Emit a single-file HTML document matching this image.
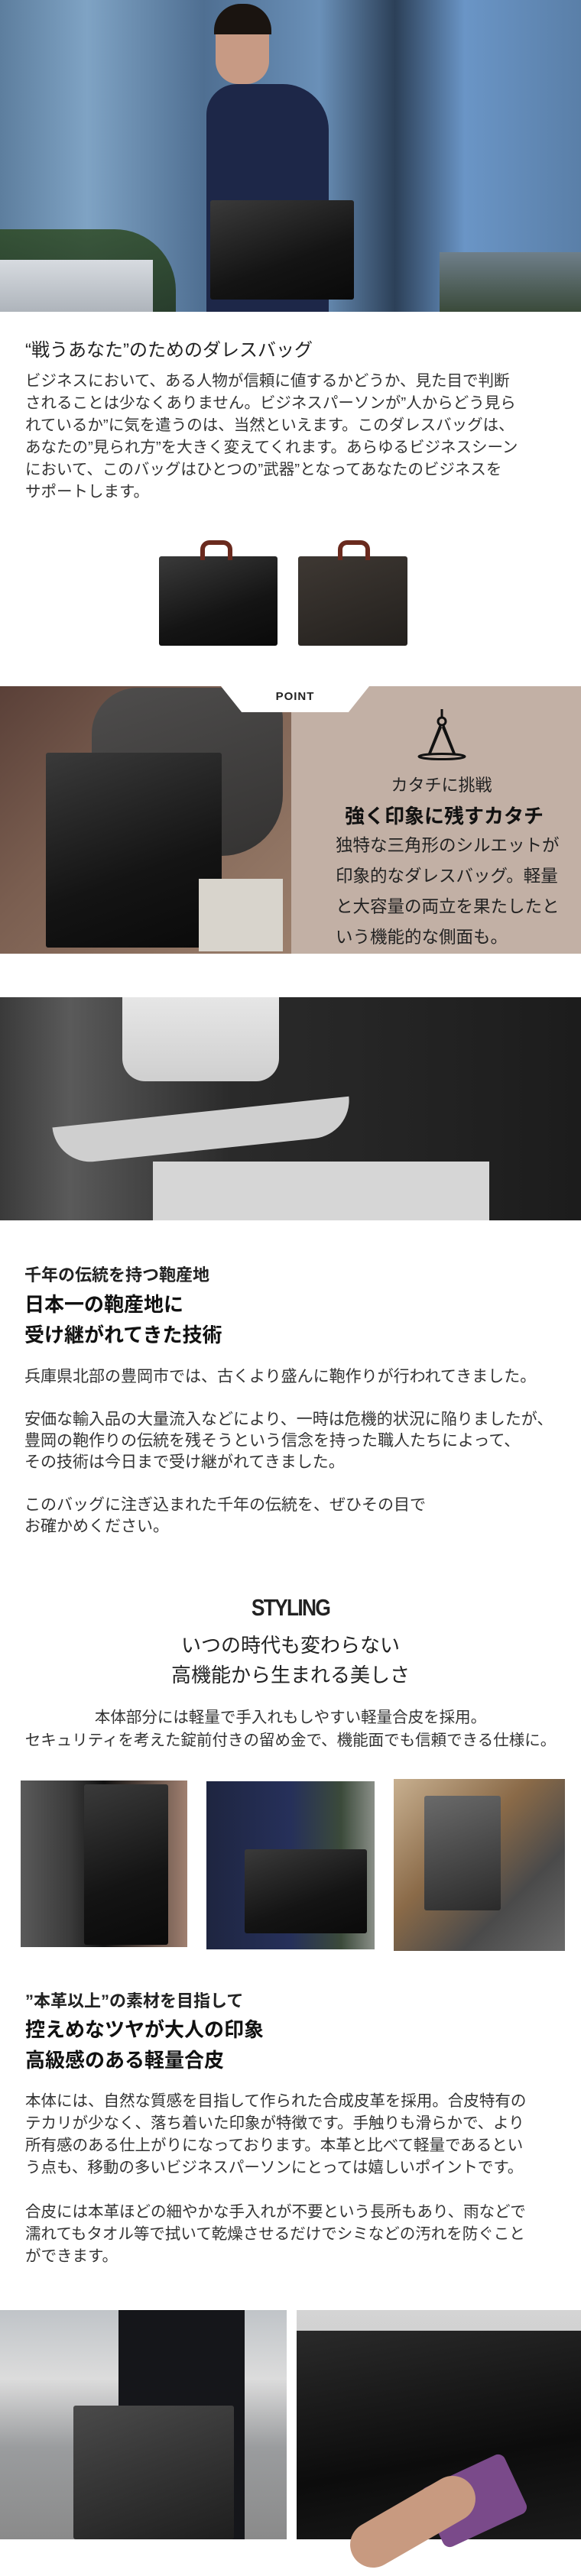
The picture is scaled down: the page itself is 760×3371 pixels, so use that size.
<!DOCTYPE html>
<html><head><meta charset="utf-8">
<style>
*{margin:0;padding:0;box-sizing:border-box}
body{width:760px;height:3359px;background:#fff;position:relative;overflow:hidden;font-family:"Liberation Sans","Noto Sans CJK JP",sans-serif;color:#222}
.a{position:absolute}
.t{position:absolute;white-space:nowrap}
.nw{white-space:nowrap}
.bag{position:absolute;background:linear-gradient(160deg,#3a3a3a,#141414 60%,#0a0a0a);border-radius:3px}
</style></head><body>

<!-- hero -->
<div class="a" style="left:0;top:0;width:760px;height:408px;background:linear-gradient(90deg,#5d7e9e 0%,#7fa3c4 15%,#4f6f92 35%,#6a90b8 55%,#2c4058 68%,#6a95c6 80%,#5a7fa8 100%)"></div>
<div class="a" style="left:0;top:300px;width:230px;height:108px;background:linear-gradient(180deg,#2e4a24,#1f3218);border-radius:0 80px 0 0;opacity:.85"></div>
<div class="a" style="left:0;top:340px;width:200px;height:68px;background:linear-gradient(180deg,#d7dbe0,#aeb4bb)"></div>
<div class="a" style="left:575px;top:330px;width:185px;height:78px;background:linear-gradient(180deg,#6f7f8a,#3a4a3a)"></div>
<div class="a" style="left:270px;top:110px;width:160px;height:298px;background:#1d2748;border-radius:40px 60px 0 0"></div>
<div class="a" style="left:282px;top:10px;width:70px;height:100px;background:#c79a84;border-radius:35px 35px 30px 30px"></div>
<div class="a" style="left:280px;top:5px;width:75px;height:40px;background:#1a1410;border-radius:35px 35px 0 0"></div>
<div class="bag" style="left:275px;top:262px;width:188px;height:130px"></div>

<!-- intro -->
<div class="t" style="left:33px;top:438px;font-size:24px;color:#222">“戦うあなた”のためのダレスバッグ</div>
<div class="a nw" style="left:33px;top:484px;font-size:20.5px;line-height:29px;color:#333">ビジネスにおいて、ある人物が信頼に値するかどうか、見た目で判断<br>されることは少なくありません。ビジネスパーソンが”人からどう見ら<br>れているか”に気を遣うのは、当然といえます。このダレスバッグは、<br>あなたの”見られ方”を大きく変えてくれます。あらゆるビジネスシーン<br>において、このバッグはひとつの”武器”となってあなたのビジネスを<br>サポートします。</div>
<div class="bag" style="left:208px;top:728px;width:155px;height:117px"></div>
<div class="a" style="left:262px;top:707px;width:42px;height:26px;border:6px solid #6a2a1e;border-bottom:none;border-radius:12px 12px 0 0"></div>
<div class="bag" style="left:390px;top:728px;width:143px;height:117px;background:linear-gradient(160deg,#3e3833,#23201d)"></div>
<div class="a" style="left:442px;top:707px;width:42px;height:26px;border:6px solid #6a2a1e;border-bottom:none;border-radius:12px 12px 0 0"></div>

<!-- point -->
<div class="a" style="left:0;top:898px;width:381px;height:350px;background:linear-gradient(135deg,#5a4038 0%,#7a5e50 40%,#9b7f6c 100%)"></div>
<div class="a" style="left:120px;top:900px;width:250px;height:220px;background:linear-gradient(160deg,#4d4d4d,#2f2f2f);border-radius:60px 40px 80px 30px;opacity:.95"></div>
<div class="bag" style="left:60px;top:985px;width:230px;height:255px"></div>
<div class="a" style="left:260px;top:1150px;width:110px;height:95px;background:#d8d4cc"></div>
<div class="a" style="left:381px;top:898px;width:379px;height:350px;background:#c2b0a5"></div>
<div class="a" style="left:289px;top:898px;width:194px;height:34px;background:#fff;clip-path:polygon(0 0,100% 0,86% 100%,14% 100%)"></div>
<div class="t" style="left:289px;top:903px;width:194px;text-align:center;font-size:15px;font-weight:bold;letter-spacing:1px;color:#222">POINT</div>
<svg class="a" style="left:544px;top:926px" width="70" height="70" viewBox="0 0 70 70">
<path d="M34 2v10" stroke="#111" stroke-width="3"/><circle cx="34" cy="18" r="5" fill="none" stroke="#111" stroke-width="3"/>
<path d="M31 22L16 60L20 60L34 26Z M37 22L52 60L48 60L34 26Z" fill="#111"/>
<ellipse cx="34" cy="64" rx="30" ry="3.5" fill="none" stroke="#111" stroke-width="3"/></svg>
<div class="t" style="left:381px;top:1010px;width:393px;text-align:center;font-size:22px;color:#222">カタチに挑戦</div>
<div class="t" style="left:451px;top:1048px;font-size:26px;font-weight:bold;color:#111">強く印象に残すカタチ</div>
<div class="a nw" style="left:439px;top:1087px;font-size:22.5px;line-height:40px;color:#222">独特な三角形のシルエットが<br>印象的なダレスバッグ。軽量<br>と大容量の両立を果たしたと<br>いう機能的な側面も。</div>

<!-- workshop -->
<div class="a" style="left:0;top:1305px;width:760px;height:292px;background:linear-gradient(90deg,#3a3a3a 0%,#5a5a5a 12%,#2a2a2a 40%,#262626 60%,#1c1c1c 100%)"></div>
<div class="a" style="left:160px;top:1305px;width:205px;height:110px;background:linear-gradient(180deg,#e6e6e6,#cfcfcf);border-radius:0 0 30px 30px"></div>
<div class="a" style="left:70px;top:1455px;width:390px;height:50px;background:#cfcfcf;transform:rotate(-6deg);border-radius:0 0 80px 80px"></div>
<div class="a" style="left:200px;top:1520px;width:440px;height:77px;background:#d6d6d6"></div>

<!-- tradition -->
<div class="t" style="left:32px;top:1651px;font-size:22px;font-weight:bold;color:#222">千年の伝統を持つ鞄産地</div>
<div class="a nw" style="left:32px;top:1687px;font-size:26px;font-weight:bold;line-height:40px;color:#111">日本一の鞄産地に<br>受け継がれてきた技術</div>
<div class="a nw" style="left:32px;top:1788px;font-size:21px;line-height:28px;color:#333">兵庫県北部の豊岡市では、古くより盛んに鞄作りが行われてきました。<br><br>安価な輸入品の大量流入などにより、一時は危機的状況に陥りましたが、<br>豊岡の鞄作りの伝統を残そうという信念を持った職人たちによって、<br>その技術は今日まで受け継がれてきました。<br><br>このバッグに注ぎ込まれた千年の伝統を、ぜひその目で<br>お確かめください。</div>

<!-- styling -->
<div class="t" style="left:0;top:2086px;width:760px;text-align:center;font-size:31px;font-weight:bold;letter-spacing:-2px;transform:scaleX(.85);color:#222">STYLING</div>
<div class="a nw" style="left:0;top:2134px;width:760px;text-align:center;font-size:26px;line-height:39px;color:#222">いつの時代も変わらない<br>高機能から生まれる美しさ</div>
<div class="a nw" style="left:0;top:2233px;width:760px;text-align:center;font-size:20.5px;line-height:30px;color:#333">本体部分には軽量で手入れもしやすい軽量合皮を採用。<br>セキュリティを考えた錠前付きの留め金で、機能面でも信頼できる仕様に。</div>
<div class="a" style="left:27px;top:2330px;width:218px;height:218px;background:linear-gradient(90deg,#5a5a5a,#3a3a3a 30%,#111 50%,#a08070 100%)"></div>
<div class="bag" style="left:110px;top:2335px;width:110px;height:210px"></div>
<div class="a" style="left:270px;top:2331px;width:220px;height:220px;background:linear-gradient(90deg,#1e2540 0%,#26305a 50%,#3b4a3a 80%,#8a8f88 100%)"></div>
<div class="bag" style="left:320px;top:2420px;width:160px;height:110px"></div>
<div class="a" style="left:515px;top:2328px;width:224px;height:225px;background:linear-gradient(135deg,#c8b090,#8a6a48 40%,#4a4a4a 70%,#6a6a6a)"></div>
<div class="bag" style="left:555px;top:2350px;width:100px;height:150px;background:linear-gradient(160deg,#6a6a6a,#2a2a2a)"></div>

<!-- material -->
<div class="t" style="left:33px;top:2601px;font-size:22px;font-weight:bold;color:#222">”本革以上”の素材を目指して</div>
<div class="a nw" style="left:33px;top:2636px;font-size:26px;font-weight:bold;line-height:40px;color:#111">控えめなツヤが大人の印象<br>高級感のある軽量合皮</div>
<div class="a nw" style="left:33px;top:2735px;font-size:20.5px;line-height:29px;color:#333">本体には、自然な質感を目指して作られた合成皮革を採用。合皮特有の<br>テカリが少なく、落ち着いた印象が特徴です。手触りも滑らかで、より<br>所有感のある仕上がりになっております。本革と比べて軽量であるとい<br>う点も、移動の多いビジネスパーソンにとっては嬉しいポイントです。<br><br>合皮には本革ほどの細やかな手入れが不要という長所もあり、雨などで<br>濡れてもタオル等で拭いて乾燥させるだけでシミなどの汚れを防ぐこと<br>ができます。</div>

<!-- bottom photos -->
<div class="a" style="left:0;top:3023px;width:375px;height:300px;background:linear-gradient(180deg,#c0c4c8 0%,#dcdcdc 30%,#9a9c9e 60%,#8a8a8a 100%)"></div>
<div class="a" style="left:155px;top:3023px;width:165px;height:300px;background:#15161a"></div>
<div class="bag" style="left:96px;top:3148px;width:210px;height:175px;background:linear-gradient(160deg,#4a4a4a,#1e1e1e)"></div>
<div class="a" style="left:388px;top:3023px;width:372px;height:300px;background:linear-gradient(180deg,#d4d4d4,#bdbdbd)"></div>
<div class="bag" style="left:388px;top:3050px;width:372px;height:273px;background:linear-gradient(170deg,#2a2a2a,#0c0c0c 60%,#1a1a1a);border-radius:0"></div>
<div class="a" style="left:560px;top:3230px;width:120px;height:85px;background:#7a4a8a;transform:rotate(-25deg);border-radius:10px"></div>
<div class="a" style="left:450px;top:3270px;width:180px;height:60px;background:#c89a80;transform:rotate(-30deg);border-radius:30px"></div>
</body></html>
